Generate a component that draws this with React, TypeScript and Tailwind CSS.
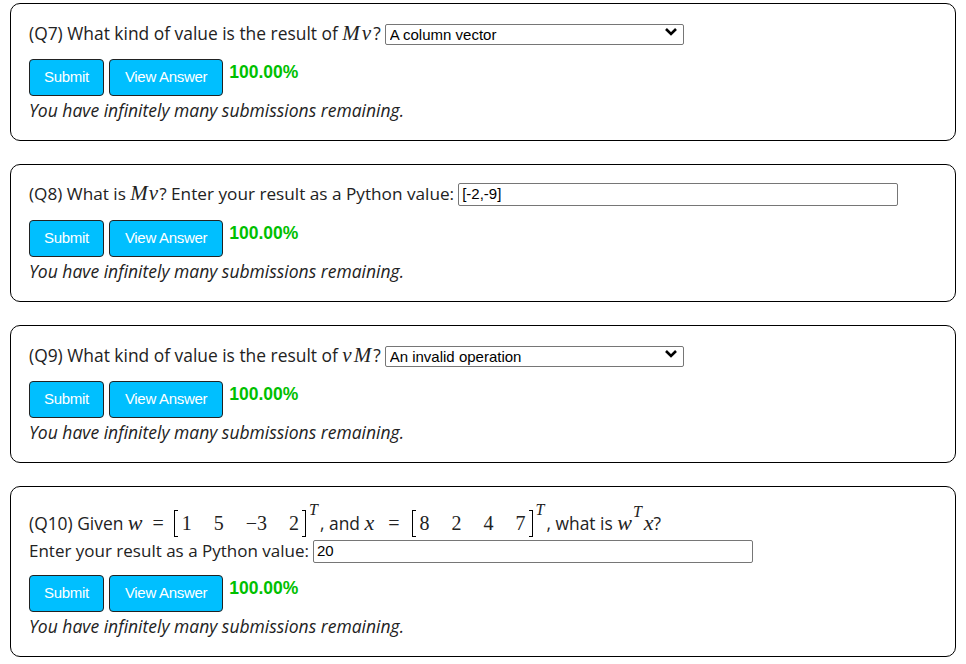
import React from "react";

const body = "font-['Open_Sans','Noto_Sans',sans-serif]";
const mathIt = "font-['Liberation_Serif',serif] italic text-[21px] leading-none";
const mathUp = "font-['Liberation_Serif',serif] text-[20px] leading-none";

function Chevron() {
  return (
    <svg width="14" height="9" viewBox="0 0 14 9" className="absolute right-[6px] top-[6px] pointer-events-none">
      <path d="M2 2 L7 7 L12 2" fill="none" stroke="#000" strokeWidth="2.6" />
    </svg>
  );
}

function Select({ value }: { value: string }) {
  return (
    <span className="relative inline-block align-middle ml-[4px]">
      <select
        defaultValue={value}
        className="appearance-none w-[299px] h-[21px] border border-[#767676] rounded-[2px] bg-white pl-[4px] font-['Liberation_Sans',Arial,sans-serif] text-[15px] text-black leading-[19px] outline-none"
      >
        <option>{value}</option>
      </select>
      <Chevron />
    </span>
  );
}

function TextInput({ value }: { value: string }) {
  return (
    <input
      defaultValue={value}
      className="w-[440px] h-[23px] border border-[#767676] rounded-[2px] bg-white px-[3px] font-['Liberation_Sans',Arial,sans-serif] text-[15px] text-black outline-none align-middle"
    />
  );
}

function Bracket({ side }: { side: "l" | "r" }) {
  return (
    <span
      className={
        side === "l"
          ? "inline-block w-[4px] h-[27px] border-l border-t border-b border-black mr-[4px]"
          : "inline-block w-[4px] h-[27px] border-r border-t border-b border-black ml-[3px]"
      }
    />
  );
}

function RowVec({ items }: { items: string[] }) {
  return (
    <span className="inline-flex items-start">
      <span className="inline-flex items-center">
        <Bracket side="l" />
        <span className={`${mathUp} flex gap-[22px]`}>
          {items.map((n, i) => (
            <span key={i}>{n}</span>
          ))}
        </span>
        <Bracket side="r" />
      </span>
      <span className="font-['Liberation_Serif',serif] italic text-[16px] leading-none -mt-[8px] ml-[3px] mr-[2px]">T</span>
    </span>
  );
}

function Actions({ last }: { last?: boolean }) {
  return (
    <>
      <div className={`flex items-start ${last ? "mt-[12px]" : "mt-[14px]"}`}>
        <button className="h-[37px] px-[14px] bg-[#00bfff] border border-[#222] rounded-[4px] text-white font-['Liberation_Sans',Arial,sans-serif] text-[15px] tracking-[-0.3px]">
          Submit
        </button>
        <button className="h-[37px] ml-[5px] px-[15px] bg-[#00bfff] border border-[#222] rounded-[4px] text-white font-['Liberation_Sans',Arial,sans-serif] text-[15px] tracking-[-0.3px]">
          View Answer
        </button>
        <span className="ml-[6px] mt-[1px] font-['Liberation_Sans',Arial,sans-serif] font-bold text-[17.5px] leading-[24px] text-[#00c000]">
          100.00%
        </span>
      </div>
      <div className="mt-[2px] italic text-[17.5px] leading-[24px]">You have infinitely many submissions remaining.</div>
    </>
  );
}

function Card({ children, last }: { children: React.ReactNode; last?: boolean }) {
  return (
    <div
      className={`mx-[10px] border border-black rounded-[10px] pt-[17px] pb-[18px] px-[18px] ${last ? "" : "mb-[23px]"}`}
    >
      {children}
      <Actions last={last} />
    </div>
  );
}

export default function App() {
  return (
    <div className={`${body} text-[17.4px] text-[#222] bg-white pt-[3px] w-[966px] h-[664px] overflow-hidden`}>
      <Card>
        <div className="h-[24px] leading-[24px] flex items-center">
          <span>
            (Q7) What kind of value is the result of <span className={`${mathIt} tracking-[2px]`}>Mv</span>?
          </span>
          <Select value="A column vector" />
        </div>
      </Card>
      <Card>
        <div className="h-[24px] leading-[24px] flex items-center">
          <span className="text-[17.2px]">
            (Q8) What is <span className={`${mathIt} tracking-[1px]`}>Mv</span>? Enter your result as a Python value:
          </span>
          <span className="ml-[4px] flex">
            <TextInput value="[-2,-9]" />
          </span>
        </div>
      </Card>
      <Card>
        <div className="h-[24px] leading-[24px] flex items-center">
          <span>
            (Q9) What kind of value is the result of <span className={`${mathIt} tracking-[2px]`}>vM</span>?
          </span>
          <Select value="An invalid operation" />
        </div>
      </Card>
      <Card last>
        <div className="h-[35px] pt-[3px] flex items-center whitespace-pre">
          <span>(Q10) Given </span>
          <span className={`${mathIt} text-[22px]`}>w</span>
          <span className={`${mathUp} mx-[10px]`}>=</span>
          <RowVec items={["1", "5", "−3", "2"]} />
          <span>, and </span>
          <span className={`${mathIt} text-[22px]`}>x</span>
          <span className={`${mathUp} ml-[14px] mr-[12px]`}>=</span>
          <RowVec items={["8", "2", "4", "7"]} />
          <span>, what is </span>
          <span className="inline-flex items-start">
            <span className={`${mathIt} text-[22px]`}>w</span>
            <span className="font-['Liberation_Serif',serif] italic text-[16px] leading-none -mt-[8px] ml-[1px] mr-[2px]">T</span>
            <span className={`${mathIt} text-[22px]`}>x</span>
          </span>
          <span>?</span>
        </div>
        <div className="h-[24px] leading-[24px] flex items-center">
          <span className="text-[17px]">Enter your result as a Python value:</span>
          <span className="ml-[4px] flex">
            <TextInput value="20" />
          </span>
        </div>
      </Card>
    </div>
  );
}
